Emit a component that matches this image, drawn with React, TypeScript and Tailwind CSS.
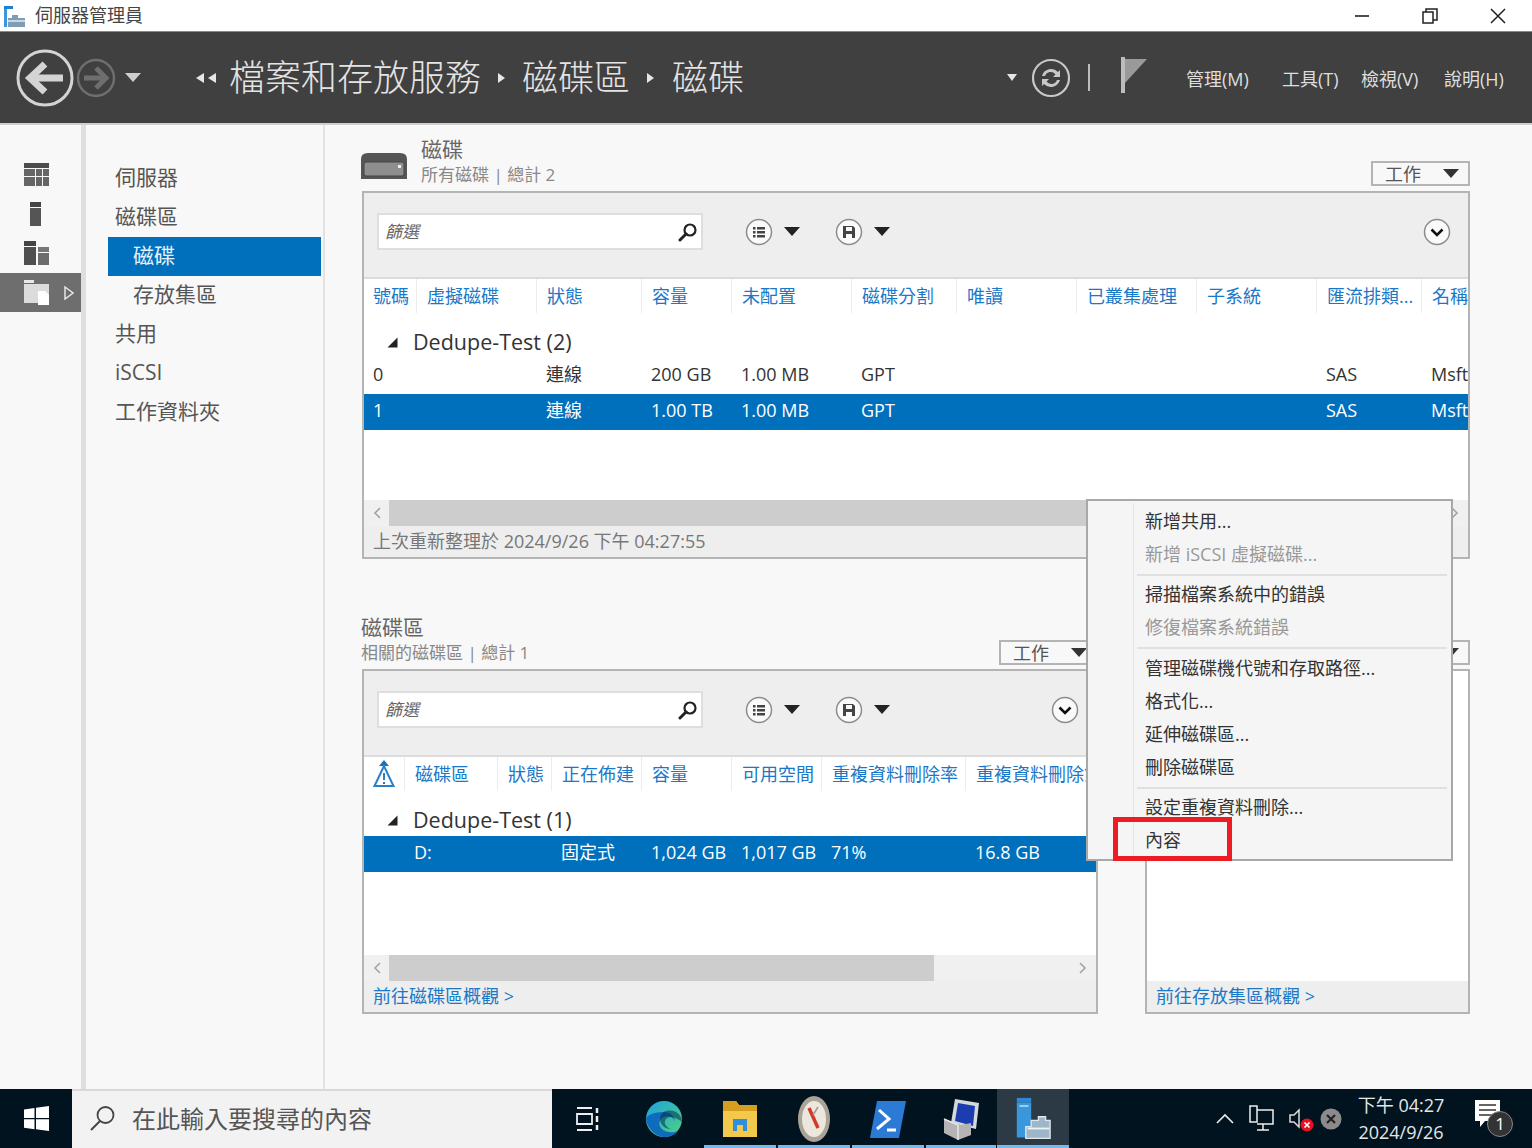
const navItems = [
  { label: "伺服器", sub: false, active: false },
  { label: "磁碟區", sub: false, active: false },
  { label: "磁碟", sub: true, active: true },
  { label: "存放集區", sub: true, active: false },
  { label: "共用", sub: false, active: false },
  { label: "iSCSI", sub: false, active: false },
  { label: "工作資料夾", sub: false, active: false },
]

const diskCols = ["號碼", "虛擬磁碟", "狀態", "容量", "未配置", "磁碟分割", "唯讀", "已叢集處理", "子系統", "匯流排類...", "名稱"]
const diskRows = [
  { cells: ["0", "", "連線", "200 GB", "1.00 MB", "GPT", "", "", "", "SAS", "Msft"], selected: false },
  { cells: ["1", "", "連線", "1.00 TB", "1.00 MB", "GPT", "", "", "", "SAS", "Msft"], selected: true },
]
const volCols = ["", "磁碟區", "狀態", "正在佈建", "容量", "可用空間", "重複資料刪除率", "重複資料刪除節省"]
const volRows = [
  { cells: ["", "D:", "", "固定式", "1,024 GB", "1,017 GB", "71%", "16.8 GB"], selected: true },
]

const menuGroups = [
  [{ t: "新增共用..." }, { t: "新增 iSCSI 虛擬磁碟...", off: true }],
  [{ t: "掃描檔案系統中的錯誤" }, { t: "修復檔案系統錯誤", off: true }],
  [{ t: "管理磁碟機代號和存取路徑..." }, { t: "格式化..." }, { t: "延伸磁碟區..." }, { t: "刪除磁碟區" }],
  [{ t: "設定重複資料刪除..." }, { t: "內容" }],
]

function Tri({ className = "" }: { className?: string }) {
  return (
    <svg width="16" height="9" viewBox="0 0 16 9" className={className}>
      <path d="M0 0h16L8 9z" fill="currentColor" />
    </svg>
  )
}

function TaskButton() {
  return (
    <div className="h-[25px] w-[99px] shrink-0 border-2 border-[#b4b4b4] bg-[#f8f8f8] flex items-center pl-[12px] pr-[9px] justify-between text-[18px] leading-none text-[#555]">
      <span>工作</span>
      <Tri className="text-[#333]" />
    </div>
  )
}

function SearchGlyph() {
  return (
    <svg width="20" height="20" viewBox="0 0 20 20">
      <circle cx="12" cy="8" r="5.5" fill="none" stroke="#222" strokeWidth="2.2" />
      <path d="M8 12l-6 6" stroke="#222" strokeWidth="3" strokeLinecap="round" />
    </svg>
  )
}

function RoundBtn({ kind }: { kind: "list" | "save" | "down" }) {
  return (
    <svg width="28" height="28" viewBox="0 0 28 28">
      <circle cx="14" cy="14" r="12.5" fill="#fafafa" stroke="#8c8c8c" strokeWidth="1.5" />
      {kind === "list" && (
        <g fill="#444">
          <rect x="8" y="9" width="2.5" height="2.5" />
          <rect x="8" y="13" width="2.5" height="2.5" />
          <rect x="8" y="17" width="2.5" height="2.5" />
          <rect x="12" y="9" width="8" height="2.5" />
          <rect x="12" y="13" width="8" height="2.5" />
          <rect x="12" y="17" width="8" height="2.5" />
        </g>
      )}
      {kind === "save" && (
        <path d="M8 8h10l2 2v10H8zM11 9v4h6V9zM11 16v4h6v-4z" fill="#444" fillRule="evenodd" />
      )}
      {kind === "down" && <path d="M8.5 11.5L14 17l5.5-5.5" fill="none" stroke="#111" strokeWidth="2.6" />}
    </svg>
  )
}

function Toolbar({ rightClass = "" }: { rightClass?: string }) {
  return (
    <div className="h-[86px] shrink-0 bg-[#eeeeee] border-b-2 border-[#dcdcdc] flex items-center pl-[13px] pb-[7px]">
      <div className="w-[326px] h-[37px] bg-white border-2 border-[#dedede] flex items-center justify-between pl-[6px] pr-[3px] text-[17px] italic text-[#666]">
        <span>篩選</span>
        <SearchGlyph />
      </div>
      <div className="ml-[42px] flex items-center gap-[11px]">
        <RoundBtn kind="list" />
        <Tri className="text-[#222]" />
      </div>
      <div className="ml-[35px] flex items-center gap-[11px]">
        <RoundBtn kind="save" />
        <Tri className="text-[#222]" />
      </div>
      <div className={rightClass}>
        <RoundBtn kind="down" />
      </div>
    </div>
  )
}

function HeadRow({ cols, grid, warn }: { cols: string[]; grid: string; warn?: boolean }) {
  return (
    <div className={`grid ${grid} h-[38px] shrink-0 bg-white pb-[4px]`}>
      {cols.map((c, i) => (
        <div
          key={i}
          className={`flex items-center whitespace-nowrap overflow-hidden text-[18px] text-[#1a78c8] ${i > 0 ? "pl-[10px] border-l border-[#ececec]" : "pl-[9px]"}`}
        >
          {warn && i === 0 ? (
            <svg width="24" height="30" viewBox="0 0 24 30" className="-ml-[1px]">
              <path d="M12 1l5 6H7z" fill="#1572bf" />
              <path d="M12 7L2.5 27h19z" fill="none" stroke="#2a7fc6" strokeWidth="2" />
              <path d="M12 14v7M12 23v2" stroke="#2a7fc6" strokeWidth="2" />
            </svg>
          ) : (
            c
          )}
        </div>
      ))}
    </div>
  )
}

function GroupRow({ label }: { label: string }) {
  return (
    <div className="h-[41px] shrink-0 pt-[9px] flex items-center pl-[23px] text-[21.5px] text-[#333]">
      <svg width="11" height="11" viewBox="0 0 11 11" className="mr-[15px]">
        <path d="M0.5 10.5h10v-10z" fill="#222" />
      </svg>
      {label}
    </div>
  )
}

function DataRow({ cells, grid, selected }: { cells: string[]; grid: string; selected: boolean }) {
  return (
    <div className={`grid ${grid} h-[36px] shrink-0 items-center pb-[3px] text-[18px] ${selected ? "bg-[#0070bd] text-white" : "text-[#333]"}`}>
      {cells.map((c, i) => (
        <div key={i} className={`whitespace-nowrap overflow-hidden ${i === 0 ? "pl-[9px]" : "pl-[10px]"}`}>
          {c}
        </div>
      ))}
    </div>
  )
}

function Scrollbar({ thumb, right }: { thumb: string; right?: boolean }) {
  return (
    <div className="h-[26px] shrink-0 bg-[#f0f0f0] flex items-center">
      <span className="w-[25px] flex justify-center">
        <svg width="8" height="12" viewBox="0 0 8 12">
          <path d="M7 1L2 6l5 5" fill="none" stroke="#a0a0a0" strokeWidth="1.5" />
        </svg>
      </span>
      <div className={`h-full bg-[#cdcdcd] ${thumb}`} />
      {right && (
        <span className="ml-auto w-[26px] flex justify-center">
          <svg width="8" height="12" viewBox="0 0 8 12">
            <path d="M1 1l5 5-5 5" fill="none" stroke="#a0a0a0" strokeWidth="1.5" />
          </svg>
        </span>
      )}
    </div>
  )
}

function ServerManagerIcon({ size = 40 }: { size?: number }) {
  return (
    <svg width={size} height={size * 1.2} viewBox="0 0 40 48">
      <rect x="2" y="1" width="16" height="5" fill="#2b88d8" />
      <rect x="2" y="6" width="16" height="39" fill="#3a96dd" />
      <rect x="5" y="9" width="10" height="2" fill="#a6d4f2" />
      <path d="M18 26h8v-4h8v4h5v20H12V33h6z" fill="#9db6c9" stroke="#dfe8ee" strokeWidth="1.5" />
      <path d="M14 35h24" stroke="#eef3f6" strokeWidth="2" />
    </svg>
  )
}

export default function App() {
  const diskGrid = "grid-cols-[52px_120px_105px_90px_120px_105px_120px_120px_120px_105px_60px]"
  const volGrid = "grid-cols-[40px_93px_54px_90px_90px_90px_144px_122px]"

  return (
    <div className="w-[1532px] h-[1148px] relative overflow-hidden flex flex-col bg-white font-['Open_Sans','Noto_Sans_CJK_TC',sans-serif] text-[#333]">
      {/* Title bar */}
      <div className="h-[31px] shrink-0 flex items-center bg-white pl-[4px]">
        <svg width="22" height="24" viewBox="0 0 22 24">
          <rect x="0" y="2" width="9" height="3" fill="#1f7fd0" />
          <rect x="0" y="5" width="3" height="18" fill="#3a96dd" />
          <path d="M4 14h4v-3h6v3h7v9H4z" fill="#7f9db5" />
          <path d="M4 17h17" stroke="#e3eaf0" strokeWidth="1.5" />
        </svg>
        <span className="ml-[9px] text-[18px] text-[#444]">伺服器管理員</span>
        <div className="ml-auto flex items-center">
          <div className="w-[68px] flex justify-center">
            <svg width="16" height="16" viewBox="0 0 16 16">
              <path d="M1 8h14" stroke="#222" strokeWidth="1.6" />
            </svg>
          </div>
          <div className="w-[68px] flex justify-center">
            <svg width="16" height="16" viewBox="0 0 16 16">
              <rect x="1" y="4" width="10" height="11" fill="none" stroke="#222" strokeWidth="1.5" />
              <path d="M4 4V1h11v11h-4" fill="none" stroke="#222" strokeWidth="1.5" />
            </svg>
          </div>
          <div className="w-[68px] flex justify-center">
            <svg width="16" height="16" viewBox="0 0 16 16">
              <path d="M1 1l14 14M15 1L1 15" stroke="#222" strokeWidth="1.5" />
            </svg>
          </div>
        </div>
      </div>

      {/* Dark header */}
      <div className="h-[94px] shrink-0 bg-[#404040] border-t border-[#8a8a8a] border-b-2 border-b-[#cfcfcf] flex items-center text-[#e0e0e0]">
        <svg width="60" height="60" viewBox="0 0 60 60" className="ml-[15px]">
          <circle cx="30" cy="30" r="27" fill="none" stroke="#d4d4d4" strokeWidth="3" />
          <path d="M15 30h33" stroke="#d4d4d4" strokeWidth="7" />
          <path d="M30 16L15 30l15 14" fill="none" stroke="#d4d4d4" strokeWidth="7" />
        </svg>
        <svg width="40" height="40" viewBox="0 0 40 40" className="ml-[1px]">
          <circle cx="20" cy="20" r="18" fill="none" stroke="#6e6e6e" strokeWidth="2.5" />
          <path d="M8 20h22" stroke="#6e6e6e" strokeWidth="5" />
          <path d="M20 10l10 10-10 10" fill="none" stroke="#6e6e6e" strokeWidth="5" />
        </svg>
        <Tri className="ml-[9px] text-[#cfcfcf]" />
        <div className="ml-[54px] flex items-center gap-[2px]">
          <svg width="10" height="10" viewBox="0 0 10 10"><path d="M9 0v10L1 5z" fill="#e6e6e6" /></svg>
          <svg width="10" height="10" viewBox="0 0 10 10"><path d="M9 0v10L1 5z" fill="#e6e6e6" /></svg>
        </div>
        <span className="ml-[12px] text-[36px] leading-none font-light text-[#e4e4e4] whitespace-nowrap">檔案和存放服務</span>
        <svg width="10" height="10" viewBox="0 0 10 10" className="ml-[15px]"><path d="M2 0v10l7-5z" fill="#e6e6e6" /></svg>
        <span className="ml-[16px] text-[36px] leading-none font-light text-[#e4e4e4] whitespace-nowrap">磁碟區</span>
        <svg width="10" height="10" viewBox="0 0 10 10" className="ml-[15px]"><path d="M2 0v10l7-5z" fill="#e6e6e6" /></svg>
        <span className="ml-[17px] text-[36px] leading-none font-light text-[#e4e4e4] whitespace-nowrap">磁碟</span>
        <div className="ml-auto flex items-center">
          <svg width="10" height="7" viewBox="0 0 10 7"><path d="M0 0h10L5 7z" fill="#e6e6e6" /></svg>
          <svg width="40" height="40" viewBox="0 0 40 40" className="ml-[14px]">
            <circle cx="20" cy="20" r="18" fill="none" stroke="#c8c8c8" strokeWidth="2.2" />
            <path d="M11 18a9.5 9.5 0 0 1 16-4l2-2v7h-7l2.5-2.5A6 6 0 0 0 14 18z" fill="#c8c8c8" />
            <path d="M29 22a9.5 9.5 0 0 1-16 4l-2 2v-7h7l-2.5 2.5A6 6 0 0 0 26 22z" fill="#c8c8c8" />
          </svg>
          <div className="ml-[17px] w-[2px] h-[27px] bg-[#bcbcbc]" />
          <svg width="26" height="36" viewBox="0 0 26 36" className="ml-[31px] mb-[6px]">
            <rect x="0" y="0" width="4" height="36" fill="#bdbdbd" />
            <path d="M4 2h22L4 26z" fill="#9a9a9a" />
          </svg>
          <div className="ml-[39px] mt-[3px] flex items-center text-[18px] text-[#dedede] whitespace-nowrap">
            <span className="w-[96px]">管理(M)</span>
            <span className="w-[79px]">工具(T)</span>
            <span className="w-[83px]">檢視(V)</span>
            <span className="w-[88px]">說明(H)</span>
          </div>
        </div>
      </div>

      {/* Main area */}
      <div className="flex-1 min-h-0 flex bg-[#f8f8f8]">
        {/* Icon rail */}
        <div className="w-[86px] shrink-0 pt-[31px] flex flex-col border-r-[5px] border-[#dedede]">
          {[0, 1, 2].map((n) => (
            <div key={n} className="h-[39px] flex items-center pl-[24px] pb-[2px]">
              {n === 0 && (
                <svg width="25" height="23" viewBox="0 0 25 23">
                  <rect width="25" height="5" fill="#4c4c4c" />
                  <path d="M0 6h11v7H0zM12 6h6v7h-6zM19 6h6v7h-6zM0 14h11v9H0zM12 14h6v9h-6zM19 14h6v9h-6z" fill="#666" />
                </svg>
              )}
              {n === 1 && (
                <svg width="25" height="24" viewBox="0 0 25 24">
                  <rect x="6" width="11" height="5" fill="#444" />
                  <rect x="6" y="6" width="11" height="18" fill="#555" />
                </svg>
              )}
              {n === 2 && (
                <svg width="25" height="24" viewBox="0 0 25 24">
                  <rect width="12" height="5" fill="#444" />
                  <rect y="6" width="12" height="18" fill="#4f4f4f" />
                  <rect x="14" y="6" width="11" height="5" fill="#777" />
                  <rect x="14" y="12" width="11" height="12" fill="#6c6c6c" />
                </svg>
              )}
            </div>
          ))}
          <div className="h-[39px] bg-[#6e6e6e] flex items-center pl-[24px]">
            <svg width="25" height="25" viewBox="0 0 25 25">
              <path d="M0 0h10v3H0z" fill="#e8e8e8" />
              <path d="M0 4h25v19H0z" fill="#dcdcdc" />
              <path d="M14 11h7l4 4v10H14z" fill="#ffffff" />
            </svg>
            <svg width="10" height="14" viewBox="0 0 10 14" className="ml-[15px]">
              <path d="M1 1l8 6-8 6z" fill="none" stroke="#e6e6e6" strokeWidth="1.5" />
            </svg>
          </div>
        </div>

        {/* Nav */}
        <div className="w-[239px] shrink-0 border-r-2 border-[#e2e2e2] pt-[34px] pl-[22px] pr-[2px]">
          {navItems.map((n) => (
            <div
              key={n.label}
              className={`h-[39px] flex items-center pb-[2px] text-[21px] ${n.sub ? "pl-[25px]" : "pl-[7px]"} ${n.active ? "bg-[#0070bd] text-[#e8f2fa]" : "text-[#555]"}`}
            >
              {n.label}
            </div>
          ))}
        </div>

        {/* Content */}
        <div className="flex-1 min-w-0 pl-[36px] pr-[62px]">
          {/* Disks */}
          <div className="h-[66px] flex">
            <svg width="48" height="30" viewBox="0 0 48 30" className="mt-[26px] shrink-0 -ml-[1px]">
              <path d="M1 8q0-6 7-6h32q7 0 7 6v20H1z" fill="#555" />
              <rect x="4" y="11" width="40" height="14" rx="2" fill="#8e8e8e" stroke="#444" />
              <rect x="38" y="14" width="3" height="3" fill="#eee" />
            </svg>
            <div className="ml-[13px] pt-[11px]">
              <div className="text-[21px] leading-[27px] text-[#666]">磁碟</div>
              <div className="text-[17px] leading-[24px] text-[#888]">所有磁碟 | 總計 2</div>
            </div>
            <div className="ml-auto mt-[36px]">
              <TaskButton />
            </div>
          </div>
          <div className="ml-[1px] h-[368px] border-2 border-[#b4b4b4] bg-white flex flex-col overflow-hidden">
            <Toolbar rightClass="ml-auto mr-[17px]" />
            <HeadRow cols={diskCols} grid={diskGrid} />
            <GroupRow label="Dedupe-Test (2)" />
            {diskRows.map((r) => (
              <DataRow key={r.cells[0]} cells={r.cells} grid={diskGrid} selected={r.selected} />
            ))}
            <div className="flex-1" />
            <Scrollbar thumb="w-[698px]" right />
            <div className="h-[31px] shrink-0 bg-[#eeeeee] pl-[9px] flex items-center text-[18px] text-[#777]">
              上次重新整理於 2024/9/26 下午 04:27:55
            </div>
          </div>

          {/* Volumes + storage pools */}
          <div className="mt-[57px] flex gap-[47px] ml-[1px]">
            <div className="w-[736px] shrink-0">
              <div className="h-[53px] flex -ml-[1px]">
                <div className="-mt-[2px]">
                  <div className="text-[21px] leading-[27px] text-[#666]">磁碟區</div>
                  <div className="text-[17px] leading-[24px] text-[#888]">相關的磁碟區 | 總計 1</div>
                </div>
                <div className="ml-auto mt-[24px]">
                  <TaskButton />
                </div>
              </div>
              <div className="h-[345px] border-2 border-[#b4b4b4] bg-white flex flex-col overflow-hidden">
                <Toolbar rightClass="ml-[161px]" />
                <HeadRow cols={volCols} grid={volGrid} warn />
                <GroupRow label="Dedupe-Test (1)" />
                {volRows.map((r) => (
                  <DataRow key={r.cells[1]} cells={r.cells} grid={volGrid} selected={r.selected} />
                ))}
                <div className="flex-1" />
                <Scrollbar thumb="w-[545px]" right />
                <div className="h-[31px] shrink-0 bg-[#eeeeee] pl-[9px] flex items-center text-[18px] text-[#1a78c8]">
                  前往磁碟區概觀 &gt;
                </div>
              </div>
            </div>
            <div className="w-[325px] shrink-0">
              <div className="h-[53px] flex justify-end">
                <div className="mt-[24px]">
                  <TaskButton />
                </div>
              </div>
              <div className="h-[345px] border-2 border-[#b4b4b4] bg-white flex flex-col">
                <div className="flex-1" />
                <div className="h-[31px] shrink-0 bg-[#eeeeee] pl-[9px] flex items-center text-[18px] text-[#1a78c8]">
                  前往存放集區概觀 &gt;
                </div>
              </div>
            </div>
          </div>
        </div>
      </div>

      {/* Taskbar */}
      <div className="h-[59px] shrink-0 bg-[#00131f] flex items-center text-white">
        <div className="w-[72px] shrink-0 flex justify-center">
          <svg width="25" height="25" viewBox="0 0 25 25">
            <path d="M0 3.5l10.5-1.5v10H0zM12 1.8L25 0v12H12zM0 13.2h10.5v10L0 21.7zM12 13.2h13V25l-13-1.8z" fill="#fff" />
          </svg>
        </div>
        <div className="w-[480px] h-full shrink-0 bg-[#f2f2f2] border-t-2 border-[#d8d8d8] flex items-center pl-[17px] pb-[2px] text-[#555] text-[24px]">
          <svg width="27" height="27" viewBox="0 0 27 27">
            <circle cx="16.5" cy="10" r="8" fill="none" stroke="#444" strokeWidth="1.8" />
            <path d="M11 16L2 25" stroke="#444" strokeWidth="2" />
          </svg>
          <span className="ml-[16px]">在此輸入要搜尋的內容</span>
        </div>
        {/* Pinned apps */}
        <div className="w-[72px] shrink-0 flex justify-center">
          <svg width="24" height="24" viewBox="0 0 24 24">
            <path d="M1 1h15M1 23h15M1 7h15v10H1z" fill="none" stroke="#eee" strokeWidth="1.8" />
            <path d="M21 1v5M21 9v6M21 18v5" stroke="#eee" strokeWidth="2.5" />
          </svg>
        </div>
        <div className="w-[79px] shrink-0 flex justify-center">
          <svg width="38" height="38" viewBox="0 0 38 38">
            <defs>
              <linearGradient id="edgeTop" x1="0" y1="0" x2="1" y2="1">
                <stop offset="0" stopColor="#1fa2e0" />
                <stop offset="1" stopColor="#4fd27e" />
              </linearGradient>
            </defs>
            <circle cx="19" cy="19" r="18" fill="url(#edgeTop)" />
            <path d="M1 19C3 30 12 37 19 37c6 0 11-2 14-6-5 2-13 2-17-3-3-4-2-9 3-11 4-2 10 0 11 5 0-6-5-10-11-10C9 12 2 15 1 19z" fill="#0f6cbd" />
            <path d="M37 22c0-8-8-13-16-11-4 1-6 4-6 8 0 6 5 10 11 10-4-1-7-5-6-8 1-4 6-5 10-3 3 1 6 3 7 4z" fill="#062d4f" opacity="0.55" />
          </svg>
        </div>
        <div className="w-[74px] h-full shrink-0 flex items-center justify-center relative">
          <svg width="34" height="36" viewBox="0 0 34 36">
            <path d="M0 0h13l3 4h18v32H0z" fill="#f2c94c" />
            <path d="M0 0h13l3 4h18v6H0z" fill="#d69e1e" />
            <path d="M10 18h14v12H10z" fill="#2f8fdc" />
            <path d="M14 24h6v6h-6z" fill="#f2c94c" />
          </svg>
          <div className="absolute bottom-0 left-[1px] right-[1px] h-[3px] bg-[#76b9ed]" />
        </div>
        <div className="w-[74px] h-full shrink-0 flex items-center justify-center relative">
          <svg width="34" height="48" viewBox="0 0 34 48">
            <ellipse cx="17" cy="24" rx="16" ry="23" fill="#a9a398" />
            <ellipse cx="17" cy="24" rx="12" ry="18" fill="#ece7dd" />
            <path d="M12 13l9 20" stroke="#d6372c" strokeWidth="3.5" />
            <path d="M21 12l-5 8" stroke="#9a9a9a" strokeWidth="1.5" />
          </svg>
          <div className="absolute bottom-0 left-[1px] right-[1px] h-[3px] bg-[#76b9ed]" />
        </div>
        <div className="w-[74px] h-full shrink-0 flex items-center justify-center relative">
          <svg width="36" height="38" viewBox="0 0 36 38">
            <path d="M7 1h29l-7 37H0z" fill="#2a7ad6" />
            <path d="M9 10l10 9-12 10" fill="none" stroke="#fff" strokeWidth="3" />
            <path d="M17 30h9" stroke="#fff" strokeWidth="3" />
          </svg>
          <div className="absolute bottom-0 left-[1px] right-[1px] h-[3px] bg-[#76b9ed]" />
        </div>
        <div className="w-[72px] h-full shrink-0 flex items-center justify-center relative">
          <svg width="36" height="44" viewBox="0 0 36 44">
            <path d="M12 2l24 4-3 26L8 26z" fill="#d5d9dd" />
            <path d="M15 6l17 3-2 20-18-5z" fill="#1c3db0" />
            <path d="M1 22l17 6 10-2v12l-13 5-14-7z" fill="#b4b4b4" />
            <path d="M1 22l14 6v15" fill="none" stroke="#e6e6e6" strokeWidth="1.5" />
          </svg>
          <div className="absolute bottom-0 left-[1px] right-[1px] h-[3px] bg-[#76b9ed]" />
        </div>
        <div className="w-[72px] h-full shrink-0 flex items-center justify-center relative bg-[#2b3a45]">
          <ServerManagerIcon size={36} />
          <div className="absolute bottom-0 left-0 right-0 h-[3px] bg-[#76b9ed]" />
        </div>

        {/* Tray */}
        <div className="ml-auto flex items-center">
          <svg width="18" height="11" viewBox="0 0 18 11">
            <path d="M1 10l8-8 8 8" fill="none" stroke="#eee" strokeWidth="1.6" />
          </svg>
          <svg width="25" height="27" viewBox="0 0 25 27" className="ml-[15px]">
            <path d="M1 1h7v16H1zM8 5h16v14H8M14 19v6M8 25h12" fill="none" stroke="#eee" strokeWidth="1.5" />
          </svg>
          <svg width="26" height="26" viewBox="0 0 26 26" className="ml-[15px]">
            <path d="M1 9h4l5-5v17l-5-5H1z" fill="none" stroke="#ddd" strokeWidth="1.5" />
            <circle cx="18" cy="19" r="6.5" fill="#e81123" />
            <path d="M15.5 16.5l5 5M20.5 16.5l-5 5" stroke="#fff" strokeWidth="1.6" />
          </svg>
          <svg width="22" height="22" viewBox="0 0 22 22" className="ml-[5px]">
            <circle cx="11" cy="11" r="10.5" fill="#8b8b8b" />
            <path d="M7 7l8 8M15 7l-8 8" stroke="#222" strokeWidth="2.2" />
          </svg>
          <div className="ml-[15px] w-[88px] text-[18px] leading-[27px] text-[#e6e6e6] whitespace-nowrap text-center">
            <div>下午 04:27</div>
            <div>2024/9/26</div>
          </div>
          <div className="ml-[28px] mr-[17px] w-[42px] h-[42px] relative">
            <svg width="26" height="30" viewBox="0 0 26 30" className="absolute left-[2px] top-[1px]">
              <path d="M0 1h25v21H10l-5 6v-6H0z" fill="#fff" />
              <path d="M4 6h17M4 11h17M4 16h17" stroke="#333" strokeWidth="1.5" />
            </svg>
            <div className="absolute left-[14px] top-[13px] w-[26px] h-[26px] rounded-full bg-[#333] border border-[#888] flex items-center justify-center text-[17px] leading-none text-white">
              1
            </div>
          </div>
        </div>
      </div>

      {/* Context menu */}
      <div className="absolute left-[1086px] top-[499px] w-[367px] h-[362px] bg-[#f5f5f5] border-2 border-[#a8a8a8] pt-[4px] pr-[4px]">
        <div className="absolute left-[45px] top-[2px] bottom-[2px] w-px bg-[#e4e4e4]" />
        {menuGroups.map((g, gi) => (
          <div key={gi}>
            {gi > 0 && (
              <div className={`ml-[49px] flex items-center ${gi === 2 ? "h-[8px]" : "h-[7px]"}`}>
                <div className="h-[2px] w-full bg-[#e0e0e0]" />
              </div>
            )}
            {g.map((m) => (
              <div key={m.t} className={`h-[33px] pl-[57px] flex items-center text-[18px] whitespace-nowrap ${"off" in m && m.off ? "text-[#999]" : "text-[#333]"}`}>
                {m.t}
              </div>
            ))}
          </div>
        ))}
      </div>

      {/* Red highlight */}
      <div className="absolute left-[1113px] top-[817px] w-[119px] h-[44px] border-[5px] border-[#ed1c24]" />
    </div>
  )
}
